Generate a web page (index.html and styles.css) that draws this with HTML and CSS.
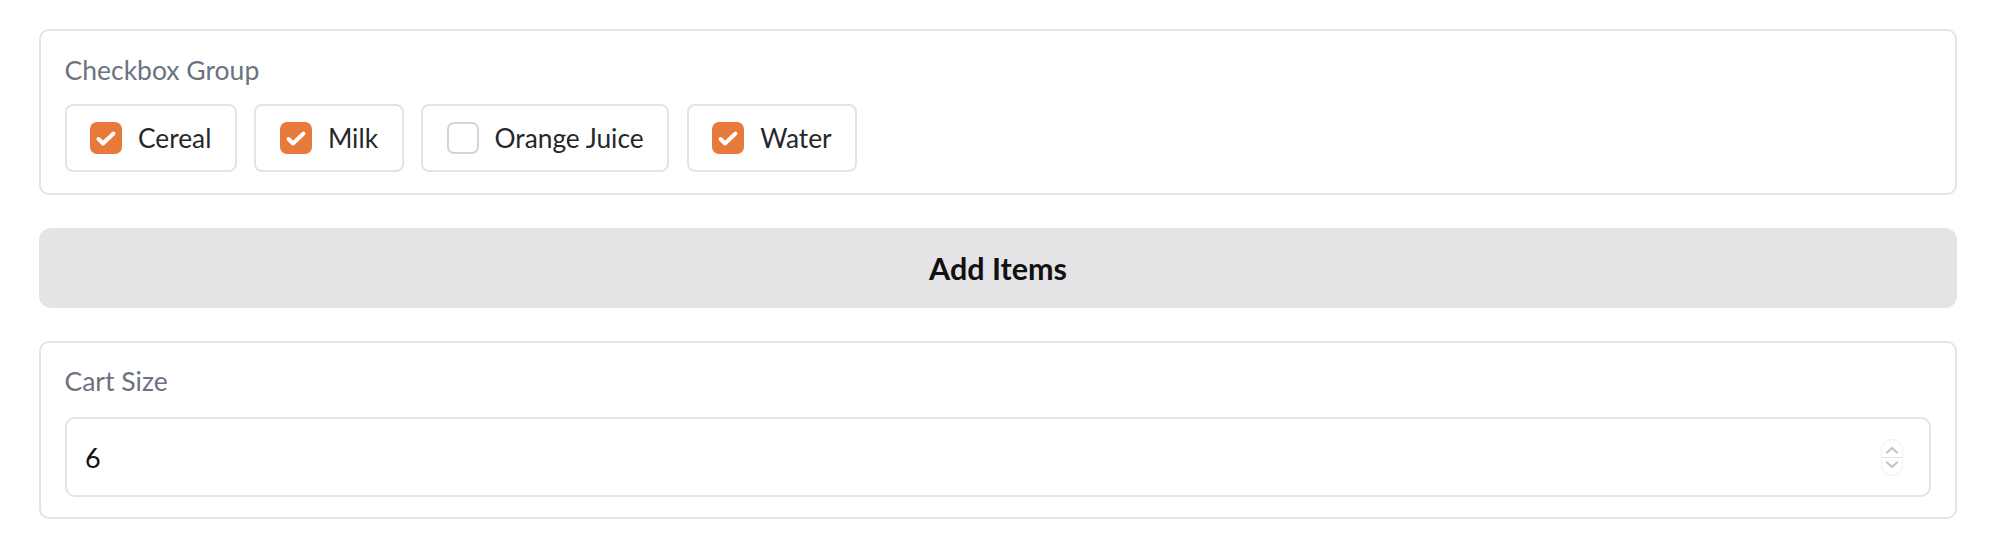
FILE: index.html
```html
<!DOCTYPE html>
<html lang="en">
<head>
<meta charset="utf-8">
<title>Cart</title>
<link rel="stylesheet" href="styles.css">
</head>
<body>
<main class="page">
  <section class="block group-block">
    <div class="block-label">Checkbox Group</div>
    <div class="choices">
      <label class="choice">
        <span class="box checked"><svg viewBox="0 0 32 32" width="32" height="32"><polyline points="8.5,17 13,21.5 23.5,11.5" fill="none" stroke="#fff" stroke-width="4" stroke-linecap="round" stroke-linejoin="round"/></svg></span>
        <span class="choice-text">Cereal</span>
      </label>
      <label class="choice">
        <span class="box checked"><svg viewBox="0 0 32 32" width="32" height="32"><polyline points="8.5,17 13,21.5 23.5,11.5" fill="none" stroke="#fff" stroke-width="4" stroke-linecap="round" stroke-linejoin="round"/></svg></span>
        <span class="choice-text">Milk</span>
      </label>
      <label class="choice">
        <span class="box"></span>
        <span class="choice-text">Orange Juice</span>
      </label>
      <label class="choice">
        <span class="box checked"><svg viewBox="0 0 32 32" width="32" height="32"><polyline points="8.5,17 13,21.5 23.5,11.5" fill="none" stroke="#fff" stroke-width="4" stroke-linecap="round" stroke-linejoin="round"/></svg></span>
        <span class="choice-text">Water</span>
      </label>
    </div>
  </section>

  <button class="action">Add Items</button>

  <section class="block number-block">
    <div class="block-label">Cart Size</div>
    <div class="number-input">
      <span class="value">6</span>
      <span class="spinner">
        <svg class="chev" viewBox="0 0 14 8" width="14" height="8"><polyline points="2,6.5 7,2 12,6.5" fill="none" stroke="#c4c4c4" stroke-width="2.2" stroke-linecap="round" stroke-linejoin="round"/></svg>
        <span class="spin-divider"></span>
        <svg class="chev" viewBox="0 0 14 8" width="14" height="8"><polyline points="2,1.5 7,6 12,1.5" fill="none" stroke="#c4c4c4" stroke-width="2.2" stroke-linecap="round" stroke-linejoin="round"/></svg>
      </span>
    </div>
  </section>
</main>
</body>
</html>
```

FILE: styles.css
```css
html, body {
  margin: 0;
  padding: 0;
  background: #ffffff;
}

body {
  font-family: "Lato", "Liberation Sans", sans-serif;
  color: #27272a;
}

.page {
  display: flex;
  flex-direction: column;
  gap: 33px;
  padding: 29px 39px 0;
}

.block {
  border: 2px solid #e4e4e7;
  border-radius: 10px;
  background: #ffffff;
}

.group-block {
  padding: 21px 24px 21px 23.5px;
}

.number-block {
  padding: 20px 24px 20px 23.5px;
}

.block-label {
  font-size: 26.5px;
  line-height: 36px;
  color: #6b7280;
  margin-bottom: 16px;
}

.number-block .block-label {
  margin-bottom: 18px;
}

.choices {
  display: flex;
  gap: 17.5px;
}

.choice {
  display: flex;
  align-items: center;
  gap: 16px;
  box-sizing: border-box;
  height: 68px;
  padding: 0 23.5px;
  border: 2px solid #e4e4e7;
  border-radius: 8px;
  background: #ffffff;
  font-size: 26.3px;
  color: #27272a;
}

.box {
  flex: none;
  box-sizing: border-box;
  width: 32px;
  height: 32px;
  border-radius: 7px;
  border: 2px solid #d4d4d8;
  background: #ffffff;
}

.box.checked {
  border: none;
  background: #e8793b;
}

.box svg {
  display: block;
}

.action {
  display: block;
  width: 100%;
  height: 80px;
  border: none;
  border-radius: 12px;
  background: #e4e4e7;
  font-family: "Lato", "Liberation Sans", sans-serif;
  font-weight: 700;
  font-size: 30.5px;
  color: #111111;
}

.number-input {
  display: flex;
  align-items: center;
  justify-content: space-between;
  box-sizing: border-box;
  height: 80px;
  padding: 0 26px 0 18.5px;
  border: 2px solid #e4e4e7;
  border-radius: 10px;
  background: #ffffff;
}

.value {
  font-size: 27px;
  color: #111111;
}

.spinner {
  display: flex;
  flex-direction: column;
  align-items: center;
  justify-content: center;
  gap: 3px;
  box-sizing: border-box;
  width: 22px;
  height: 37px;
  border: 1px solid #efefef;
  border-radius: 11px;
}

.chev {
  display: block;
}

.spin-divider {
  display: block;
  width: 100%;
  height: 1px;
  background: #e6e6e6;
}
```
